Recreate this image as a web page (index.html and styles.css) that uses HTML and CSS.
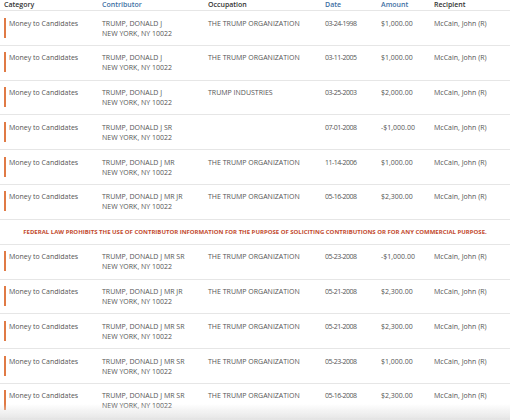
FILE: index.html
```html
<!DOCTYPE html>
<html>
<head>
<meta charset="utf-8">
<link rel="stylesheet" href="styles.css">
</head>
<body>
<div class="table">
  <div class="row head">
    <div>Category</div><div class="sort">Contributor</div><div>Occupation</div><div class="sort">Date</div><div class="sort">Amount</div><div>Recipient</div>
  </div>
  <div class="row">
    <div class="cat">Money to Candidates</div><div>TRUMP, DONALD J<br>NEW YORK, NY 10022</div><div>THE TRUMP ORGANIZATION</div><div class="date">03-24-1998</div><div>$1,000.00</div><div>McCain, John (R)</div>
  </div>
  <div class="row">
    <div class="cat">Money to Candidates</div><div>TRUMP, DONALD J<br>NEW YORK, NY 10022</div><div>THE TRUMP ORGANIZATION</div><div class="date">03-11-2005</div><div>$1,000.00</div><div>McCain, John (R)</div>
  </div>
  <div class="row">
    <div class="cat">Money to Candidates</div><div>TRUMP, DONALD J<br>NEW YORK, NY 10022</div><div>TRUMP INDUSTRIES</div><div class="date">03-25-2003</div><div>$2,000.00</div><div>McCain, John (R)</div>
  </div>
  <div class="row">
    <div class="cat">Money to Candidates</div><div>TRUMP, DONALD J SR<br>NEW YORK, NY 10022</div><div></div><div class="date">07-01-2008</div><div>-$1,000.00</div><div>McCain, John (R)</div>
  </div>
  <div class="row">
    <div class="cat">Money to Candidates</div><div>TRUMP, DONALD J MR<br>NEW YORK, NY 10022</div><div>THE TRUMP ORGANIZATION</div><div class="date">11-14-2006</div><div>$1,000.00</div><div>McCain, John (R)</div>
  </div>
  <div class="row">
    <div class="cat">Money to Candidates</div><div>TRUMP, DONALD J MR JR<br>NEW YORK, NY 10022</div><div>THE TRUMP ORGANIZATION</div><div class="date">05-16-2008</div><div>$2,300.00</div><div>McCain, John (R)</div>
  </div>
  <div class="notice">FEDERAL LAW PROHIBITS THE USE OF CONTRIBUTOR INFORMATION FOR THE PURPOSE OF SOLICITING CONTRIBUTIONS OR FOR ANY COMMERCIAL PURPOSE.</div>
  <div class="row">
    <div class="cat">Money to Candidates</div><div>TRUMP, DONALD J MR SR<br>NEW YORK, NY 10022</div><div>THE TRUMP ORGANIZATION</div><div class="date">05-23-2008</div><div>-$1,000.00</div><div>McCain, John (R)</div>
  </div>
  <div class="row">
    <div class="cat">Money to Candidates</div><div>TRUMP, DONALD J MR JR<br>NEW YORK, NY 10022</div><div>THE TRUMP ORGANIZATION</div><div class="date">05-21-2008</div><div>$2,300.00</div><div>McCain, John (R)</div>
  </div>
  <div class="row">
    <div class="cat">Money to Candidates</div><div>TRUMP, DONALD J MR SR<br>NEW YORK, NY 10022</div><div>THE TRUMP ORGANIZATION</div><div class="date">05-21-2008</div><div>$2,300.00</div><div>McCain, John (R)</div>
  </div>
  <div class="row">
    <div class="cat">Money to Candidates</div><div>TRUMP, DONALD J MR SR<br>NEW YORK, NY 10022</div><div>THE TRUMP ORGANIZATION</div><div class="date">05-23-2008</div><div>$1,000.00</div><div>McCain, John (R)</div>
  </div>
  <div class="row">
    <div class="cat">Money to Candidates</div><div>TRUMP, DONALD J MR SR<br>NEW YORK, NY 10022</div><div>THE TRUMP ORGANIZATION</div><div class="date">05-16-2008</div><div>$2,300.00</div><div>McCain, John (R)</div>
  </div>
</div>
<div class="fade"></div>
</body>
</html>
```
FILE: styles.css
```css
html, body {
  margin: 0;
  padding: 0;
  background: #ffffff;
}
body {
  width: 510px;
  height: 420px;
  overflow: hidden;
  font-family: "Open Sans", "Liberation Sans", sans-serif;
  font-size: 7px;
  color: #555555;
}
.table {
  display: flex;
  flex-direction: column;
}
.row {
  display: grid;
  grid-template-columns: 98px 106px 117px 56px 53px 1fr;
  padding: 7.5px 0 6.3px 4px;
  line-height: 10px;
  border-bottom: 1px solid #e6e6e6;
  height: 20px;
  white-space: nowrap;
}
.row.head {
  padding: 0 0 0 4px;
  height: 10px;
  font-weight: 600;
  color: #333333;
  line-height: 10px;
}
.row.head .sort {
  color: #3d6fa3;
}
.date {
  letter-spacing: -0.5px;
}
.cat {
  border-left: 2.5px solid #e07a45;
  padding-left: 3px;
  margin-top: -1px;
  height: 20px;
  line-height: 12px;
}
.notice {
  height: 24px;
  line-height: 24px;
  text-align: center;
  font-size: 6px;
  font-weight: 700;
  color: #c24a2e;
  border-bottom: 1px solid #e6e6e6;
  white-space: nowrap;
}
.fade {
  position: fixed;
  left: 0;
  right: 0;
  bottom: 0;
  height: 16px;
  background: linear-gradient(to bottom, rgba(235,235,235,0), rgba(228,228,228,1));
}
```
